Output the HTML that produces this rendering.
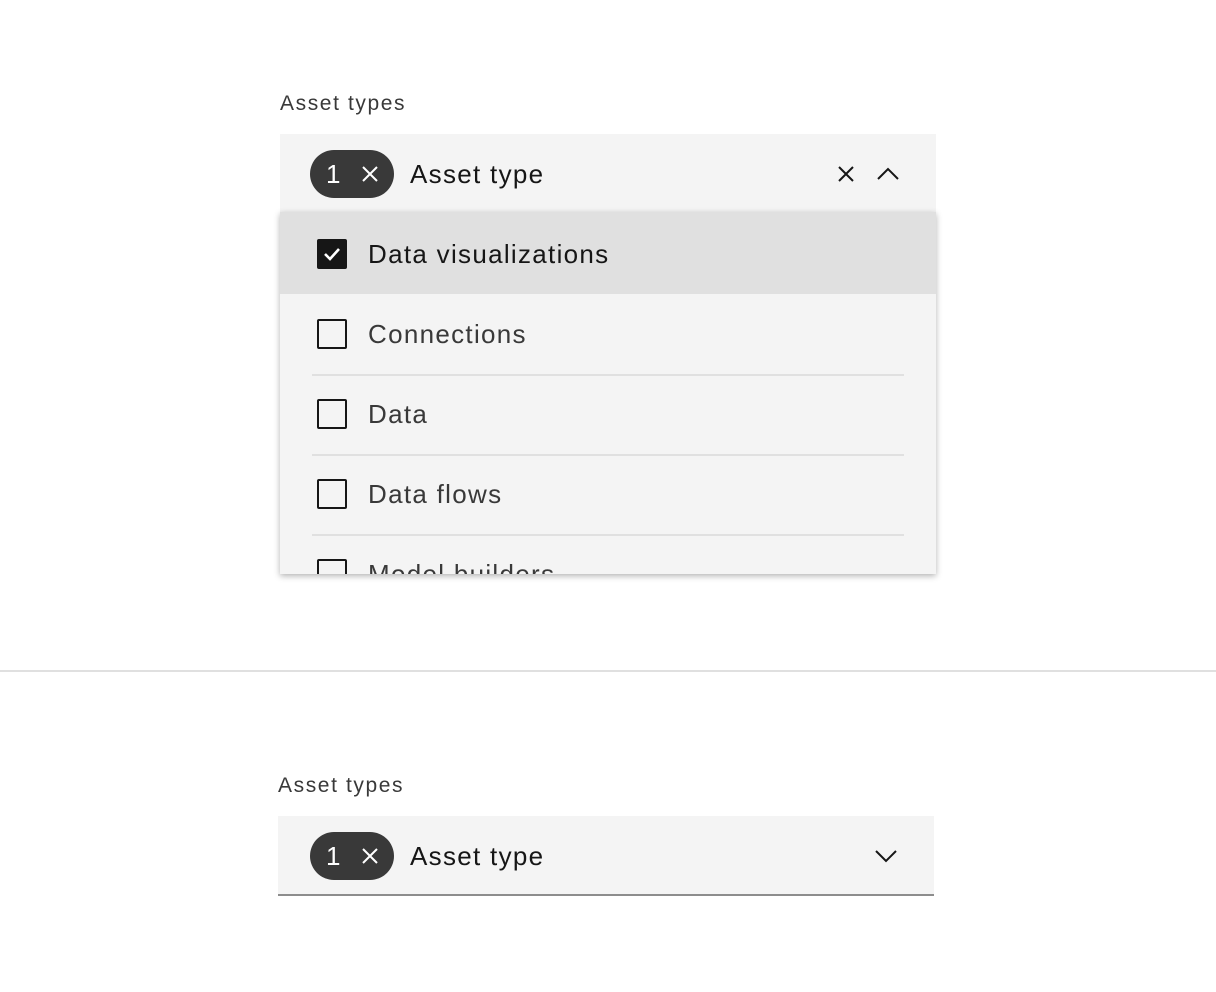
<!DOCTYPE html>
<html><head><meta charset="utf-8"><style>
body{margin:0;width:1216px;height:992px;background:#fff;position:relative;font-family:"Liberation Sans",sans-serif;color:#161616;overflow:hidden}
.a{position:absolute}
.lbl{font-size:21px;color:#393939;letter-spacing:1.6px}
.field{background:#f4f4f4}
.tag{background:#393939;border-radius:24px;width:84px;height:48px;color:#fff}
.t26{font-size:26px;line-height:30px;letter-spacing:1.3px}
.cb{width:26px;height:26px;border:2px solid #161616;border-radius:2px;box-sizing:content-box}
.sep{height:2px;background:#e0e0e0;left:312px;width:592px}
</style></head><body>
<div class="a lbl" style="left:280px;top:92px">Asset types</div>
<div class="a field" style="left:280px;top:134px;width:656px;height:78px"></div>
<div class="a tag" style="left:310px;top:150px">
 <div class="a t26" style="left:16px;top:9px;color:#fff">1</div>
 <svg class="a" style="left:50px;top:14px" width="20" height="20" viewBox="0 0 20 20"><path d="M3 3L17 17M17 3L3 17" stroke="#fff" stroke-width="2"/></svg>
</div>
<div class="a t26" style="left:410px;top:159px">Asset type</div>
<svg class="a" style="left:836px;top:164px" width="20" height="20" viewBox="0 0 20 20"><path d="M3 3L17 17M17 3L3 17" stroke="#161616" stroke-width="2"/></svg>
<svg class="a" style="left:876px;top:164px" width="24" height="20" viewBox="0 0 24 20"><path d="M2 15L12 5L22 15" stroke="#161616" stroke-width="2" fill="none"/></svg>

<div class="a" style="left:280px;top:212px;width:656px;height:362px;background:#f4f4f4;box-shadow:0 2px 6px rgba(0,0,0,0.3);overflow:hidden">
 <div class="a" style="left:0;top:0;width:656px;height:82px;background:#e0e0e0"></div>
 <div class="a" style="left:37px;top:27px;width:30px;height:30px;background:#161616;border-radius:2px"></div>
 <svg class="a" style="left:37px;top:27px" width="30" height="30" viewBox="0 0 30 30"><path d="M8 15L13 20L22 10" stroke="#fff" stroke-width="2.6" fill="none"/></svg>
 <div class="a t26" style="left:88px;top:27px">Data visualizations</div>
 <div class="a cb" style="left:37px;top:107px"></div>
 <div class="a t26" style="left:88px;top:107px;color:#393939">Connections</div>
 <div class="a sep" style="left:32px;top:162px"></div>
 <div class="a cb" style="left:37px;top:187px"></div>
 <div class="a t26" style="left:88px;top:187px;color:#393939">Data</div>
 <div class="a sep" style="left:32px;top:242px"></div>
 <div class="a cb" style="left:37px;top:267px"></div>
 <div class="a t26" style="left:88px;top:267px;color:#393939">Data flows</div>
 <div class="a sep" style="left:32px;top:322px"></div>
 <div class="a cb" style="left:37px;top:347px"></div>
 <div class="a t26" style="left:88px;top:347px;color:#393939">Model builders</div>
</div>

<div class="a" style="left:0;top:670px;width:1216px;height:2px;background:#e0e0e0"></div>

<div class="a lbl" style="left:278px;top:774px">Asset types</div>
<div class="a field" style="left:278px;top:816px;width:656px;height:78px;border-bottom:2px solid #8d8d8d"></div>
<div class="a tag" style="left:310px;top:832px">
 <div class="a t26" style="left:16px;top:9px;color:#fff">1</div>
 <svg class="a" style="left:50px;top:14px" width="20" height="20" viewBox="0 0 20 20"><path d="M3 3L17 17M17 3L3 17" stroke="#fff" stroke-width="2"/></svg>
</div>
<div class="a t26" style="left:410px;top:841px">Asset type</div>
<svg class="a" style="left:874px;top:846px" width="24" height="20" viewBox="0 0 24 20"><path d="M2 5L12 15L22 5" stroke="#161616" stroke-width="2" fill="none"/></svg>
</body></html>
